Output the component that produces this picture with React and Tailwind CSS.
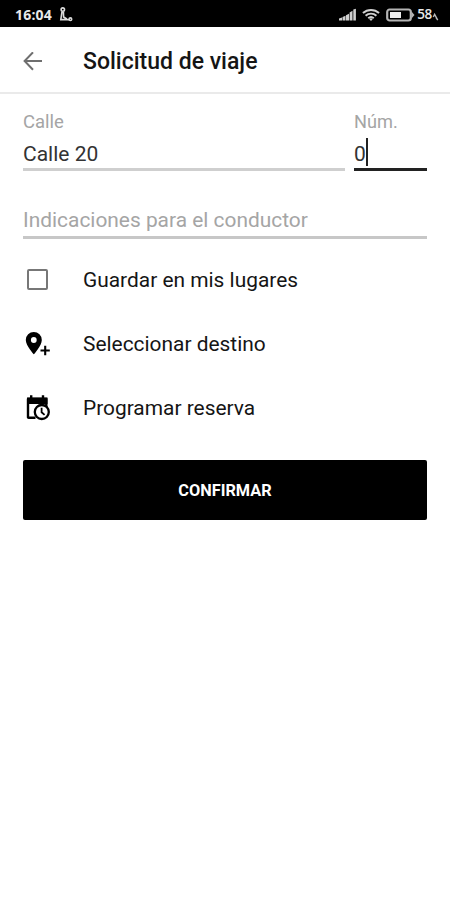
import React from "react";

function StatusBar() {
  return (
    <div className="flex h-[27px] items-center bg-black pt-[2px] pr-[11px] pl-[15px] font-['Open_Sans',sans-serif] text-[#e8e8e8]">
      <span className="text-[14px] leading-none font-bold tracking-[0.2px]">16:04</span>
      <svg className="ml-[7px]" width="15" height="15" viewBox="0 0 15 15" fill="none" stroke="#dcdcdc" strokeWidth="1.6">
        <circle cx="3.800" cy="2.600" r="1.700" />
        <path d="M3 4.500 1.800 12.600h8.200M4.400 4.500l.2 5.500 3.200 2" />
        <circle cx="11.400" cy="12.200" r="1.300" />
      </svg>
      <div className="ml-auto flex items-center">
        <svg width="18" height="13" viewBox="0 0 18 13" fill="#d0d0d0">
          <path d="M0 12.500V10.500l3-1v3zM3.500 12.500V9l3-1.200v4.700zM7 12.500V7.200l3-1.400v6.700zM10.600 12.500V4.500l2.900-1.800v9.800zM14.300 12.500V1.600L16.900.8v11.700z" />
        </svg>
        <svg className="ml-[5px]" width="18" height="14" viewBox="0 0 19 14" fill="none" stroke="#d0d0d0" strokeWidth="2.100">
          <path d="M1 4.900c4.800-4.400 12.200-4.400 17 0M3.800 7.800c3.200-3 8.200-3 11.400 0M6.600 10.500c1.700-1.600 4.100-1.600 5.800 0" />
          <path d="M7.600 11.200 9.500 13.400l1.900-2.200c-1.100-1-2.700-1-3.800 0z" fill="#d0d0d0" stroke="none" />
        </svg>
        <svg className="ml-[6px]" width="30" height="14" viewBox="0 0 30 14" fill="none">
          <rect x="1.200" y="1.500" width="23.600" height="11" rx="2.500" stroke="#b4b4b4" strokeWidth="2.200" />
          <rect x="4" y="4" width="11" height="6" fill="#ededed" />
          <path d="M25.500 3.500 28.500 7l-3 3.500z" fill="#b4b4b4" />
        </svg>
        <span className="ml-[1px] text-[13.500px] leading-none font-semibold tracking-[-0.300px]">58</span>
        <svg className="mt-[5px]" width="7" height="8" viewBox="0 0 7 9" fill="none" stroke="#b8b8b8" strokeWidth="1.600">
          <path d="M1 4.500 2.500 1.500 6 8M4.200 7 5.200 5.500" />
        </svg>
      </div>
    </div>
  );
}

function BackIcon() {
  return (
    <svg width="20" height="20" viewBox="0 0 20 20" fill="none" stroke="#6f6f6f" strokeWidth="2">
      <path d="M19 9H2M10 .3 1.600 9l8.400 8.700" />
    </svg>
  );
}

function PinPlusIcon() {
  return (
    <svg width="28" height="26" viewBox="0 0 28 26">
      <path fillRule="evenodd" d="M10.800 1a8 8 0 0 0-8 8c0 5.900 8 14.300 8 14.300s8-8.400 8-14.300a8 8 0 0 0-8-8zm0 5.100a2.900 2.900 0 1 1 0 5.800 2.900 2.900 0 0 1 0-5.800z" />
      <path d="M22.200 14.700v9.600M17.500 19.500h9.300" stroke="#000" strokeWidth="2.100" />
    </svg>
  );
}

function CalendarClockIcon() {
  return (
    <svg width="28" height="28" viewBox="0 0 28 28" fill="none" stroke="#000">
      <path d="M4 3.500h20.500v6.500H4z" fill="#000" stroke="none" />
      <path d="M8.200 1.200v4M20 1.200v4" strokeWidth="2.400" />
      <path d="M12.500 23.800H5.600c-.3 0-.6-.2-.6-.6V5h18.300v9" strokeWidth="2.400" strokeLinejoin="round" />
      <circle cx="18.800" cy="18" r="7" fill="#fff" strokeWidth="2.300" />
      <path d="M18.600 13.800v4.500l3 2.600" strokeWidth="1.800" />
    </svg>
  );
}

function OptionRow({ icon, children }) {
  return (
    <div className="flex h-16 items-center">
      <div className="flex w-[60px] items-center">{icon}</div>
      <span className="text-[20.900px] leading-6">{children}</span>
    </div>
  );
}

export default function App() {
  return (
    <div className="flex h-[900px] w-[450px] flex-col overflow-hidden bg-white font-[Roboto,sans-serif] text-[#151515]">
      <StatusBar />
      <header className="flex h-[67px] items-center border-b-2 border-[#eaeaea] pt-[4px] pl-[23px]">
        <BackIcon />
        <h1 className="ml-10 text-[23px] leading-7 font-medium">Solicitud de viaje</h1>
      </header>
      <main className="flex flex-col px-[23px]">
        <div className="flex gap-[9px] pt-4">
          <div className="flex h-[61px] w-[322px] flex-col border-b-[3px] border-[#cfcfcf]">
            <label className="text-[18.500px] leading-6 text-[#a5a5a5]">Calle</label>
            <span className="mt-[6px] text-[21px] leading-7 text-[#333]">Calle 20</span>
          </div>
          <div className="flex h-[61px] w-[73px] flex-col border-b-[3px] border-[#222]">
            <label className="text-[18.200px] leading-6 text-[#a5a5a5]">Núm.</label>
            <div className="mt-[5px] flex h-[29px] items-center text-[21px] leading-7 text-[#333]">
              <span>0</span>
              <span className="-mt-[3px] h-7 w-[2px] bg-[#222]" />
            </div>
          </div>
        </div>
        <div className="mt-[35px] flex h-[33px] border-b-[3px] border-[#c7c7c7] text-[20.900px] leading-7 text-[#a5a5a5]">
          Indicaciones para el conductor
        </div>
        <div className="mt-[9px] flex flex-col">
          <OptionRow icon={<span className="-mt-[2px] ml-1 h-[21px] w-[21px] rounded-[2px] border-2 border-[#777]" />}>Guardar en mis lugares</OptionRow>
          <OptionRow icon={<PinPlusIcon />}>Seleccionar destino</OptionRow>
          <OptionRow icon={<CalendarClockIcon />}>Programar reserva</OptionRow>
        </div>
        <button className="mt-5 h-[60px] rounded-[2px] bg-black pt-[2px] text-[16.300px] font-bold text-white">CONFIRMAR</button>
      </main>
    </div>
  );
}
